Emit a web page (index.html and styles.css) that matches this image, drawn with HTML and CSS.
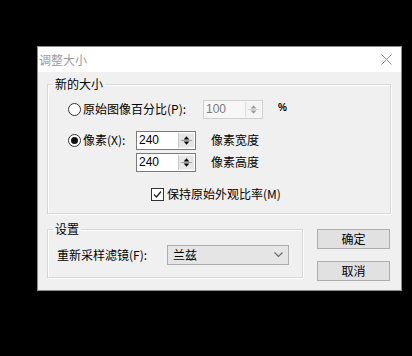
FILE: index.html
```html
<!DOCTYPE html>
<html lang="zh-CN">
<head>
<meta charset="utf-8">
<title>调整大小</title>
<link rel="stylesheet" href="styles.css">
</head>
<body>
<div class="dialog">
  <div class="titlebar">
    <span class="title">调整大小</span>
    <svg class="close" width="11" height="11" viewBox="0 0 11 11"><path d="M0.5 0.5L10.5 10.5M10.5 0.5L0.5 10.5" stroke="#8a8a8a" stroke-width="1" fill="none"/></svg>
  </div>
  <div class="content">
    <fieldset class="group group-size">
      <legend>新的大小</legend>
      <div class="row row1">
        <span class="radio"></span>
        <span class="label label-pct">原始图像百分比(P):</span>
        <div class="spin disabled">
          <span class="val">100</span>
          <svg class="arrows" width="16" height="15" viewBox="0 0 16 15"><rect x="0" y="0" width="16" height="15" fill="#f4f4f4"/><path d="M5 6.5H11L8 3Z" fill="#9a9a9a"/><path d="M2 7.5H14" stroke="#d0d0d0" stroke-width="1"/><path d="M5 8.5H11L8 12Z" fill="#9a9a9a"/></svg>
        </div>
        <span class="pct">%</span>
      </div>
      <div class="row row2">
        <span class="radio checked"></span>
        <span class="label label-px">像素(X):</span>
        <div class="spin">
          <span class="val">240</span>
          <svg class="arrows" width="16" height="15" viewBox="0 0 16 15"><rect x="0" y="0" width="16" height="15" fill="#e6e6e6"/><path d="M5 6.5H11L8 3Z" fill="#000"/><path d="M2 7.5H14" stroke="#9a9a9a" stroke-width="1"/><path d="M5 8.5H11L8 12Z" fill="#000"/></svg>
        </div>
        <span class="unit">像素宽度</span>
      </div>
      <div class="row row3">
        <div class="spin">
          <span class="val">240</span>
          <svg class="arrows" width="16" height="15" viewBox="0 0 16 15"><rect x="0" y="0" width="16" height="15" fill="#e6e6e6"/><path d="M5 6.5H11L8 3Z" fill="#000"/><path d="M2 7.5H14" stroke="#9a9a9a" stroke-width="1"/><path d="M5 8.5H11L8 12Z" fill="#000"/></svg>
        </div>
        <span class="unit">像素高度</span>
      </div>
      <div class="row row4">
        <span class="checkbox"><svg width="11" height="11" viewBox="0 0 11 11"><path d="M2 5.5L4.5 8L9 2.5" stroke="#222" stroke-width="1.3" fill="none"/></svg></span>
        <span class="label">保持原始外观比率(M)</span>
      </div>
    </fieldset>
    <div class="bottom">
      <fieldset class="group group-set">
        <legend>设置</legend>
        <div class="row row5">
          <span class="label label-filter">重新采样滤镜(F):</span>
          <div class="select">
            <span>兰兹</span>
            <svg width="9" height="6" viewBox="0 0 9 6"><path d="M0.5 0.5L4.5 4.5L8.5 0.5" stroke="#6a6a6a" stroke-width="1.1" fill="none"/></svg>
          </div>
        </div>
      </fieldset>
      <div class="buttons">
        <button class="btn">确定</button>
        <button class="btn">取消</button>
      </div>
    </div>
  </div>
</div>
</body>
</html>
```

FILE: styles.css
```css
* { box-sizing: border-box; }
html, body { margin: 0; padding: 0; }
body {
  background: #000;
  font-family: "Noto Sans CJK SC", "Liberation Sans", sans-serif;
  font-size: 12px;
  color: #000;
  padding: 46px 0 0 37px;
  height: 356px;
  overflow: hidden;
}
.dialog {
  width: 365px;
  height: 245px;
  background: #f0f0f0;
  border: 1px solid #8c8c8c;
  display: flex;
  flex-direction: column;
}
.titlebar {
  height: 25px;
  flex: none;
  background: #fff;
  display: flex;
  align-items: center;
  justify-content: space-between;
  padding: 0 9px 0 1px;
}
.title { color: #9b9b9b; font-size: 12px; line-height: 16px; }
.close { display: block; }
.content { padding: 4px 10px 0 9px; }

.group {
  margin: 0;
  padding: 0;
  min-width: 0;
  border: 1px solid #d6d6d6;
  box-shadow: inset 1px 1px 0 #fff, 1px 1px 0 #fff;
}
.group legend {
  font-size: 12px;
  line-height: 16px;
  padding: 0 2px;
  margin-left: 5px;
}
.row {
  display: flex;
  align-items: center;
  height: 20px;
  padding-left: 20px;
  line-height: 16px;
  white-space: nowrap;
}
.group-size { padding-bottom: 9px; }
.row1 { margin-top: 7px; }
.row2 { margin-top: 11px; }
.row3 { margin-top: 2px; }
.row4 { margin-top: 12px; }

.radio {
  width: 13px;
  height: 13px;
  border: 1px solid #333;
  border-radius: 50%;
  background: #fff;
  flex: none;
  display: flex;
  align-items: center;
  justify-content: center;
}
.radio.checked::after {
  content: "";
  width: 7px;
  height: 7px;
  border-radius: 50%;
  background: #111;
}
.label { margin-left: 2px; }
.label-pct { width: 120px; }
.label-px { width: 53px; }

.spin {
  width: 60px;
  height: 19px;
  border: 1px solid #7a7a7a;
  background: #fff;
  display: flex;
  align-items: center;
  justify-content: space-between;
  padding: 0 1px 0 2px;
  flex: none;
}
.spin .val {
  font-family: "Liberation Sans", Arial, sans-serif;
  font-size: 12px;
}
.spin .arrows { display: block; border-left: 1px solid #c8c8c8; }
.spin.disabled { border-color: #cfcfcf; background: #f7f7f7; }
.spin.disabled .val { color: #7a7a7a; }
.spin.disabled .arrows { border-left-color: #e0e0e0; }

.pct {
  margin-left: 15px;
  font-family: "Liberation Sans", Arial, sans-serif;
  font-weight: bold;
  font-size: 10px;
  margin-top: -3px;
}
.unit { margin-left: 15px; }
.row3 .spin { margin-left: 68px; }

.checkbox {
  margin-left: 83px;
  width: 13px;
  height: 13px;
  border: 1px solid #333;
  background: #fff;
  display: flex;
  align-items: center;
  justify-content: center;
  flex: none;
}
.checkbox svg { display: block; }
.row4 .label { margin-left: 3px; }

.bottom {
  display: flex;
  align-items: flex-start;
  margin-top: 7px;
}
.group-set {
  width: 256px;
  flex: none;
  padding-bottom: 12px;
}
.row5 { margin-top: 8px; padding-left: 9px; }
.label-filter { margin-left: 0; width: 110px; }
.select {
  width: 122px;
  height: 20px;
  border: 1px solid #adadad;
  background: #e5e5e5;
  display: flex;
  align-items: center;
  justify-content: space-between;
  padding: 0 5px 0 5px;
}
.select svg { display: block; }

.buttons {
  display: flex;
  flex-direction: column;
  gap: 12px;
  margin-left: 14px;
  margin-top: 8px;
}
.btn {
  width: 73px;
  height: 20px;
  margin: 0;
  padding: 0;
  border: 1px solid #adadad;
  background: #e1e1e1;
  font-family: "Noto Sans CJK SC", sans-serif;
  font-size: 12px;
  line-height: 16px;
  color: #000;
}
```
